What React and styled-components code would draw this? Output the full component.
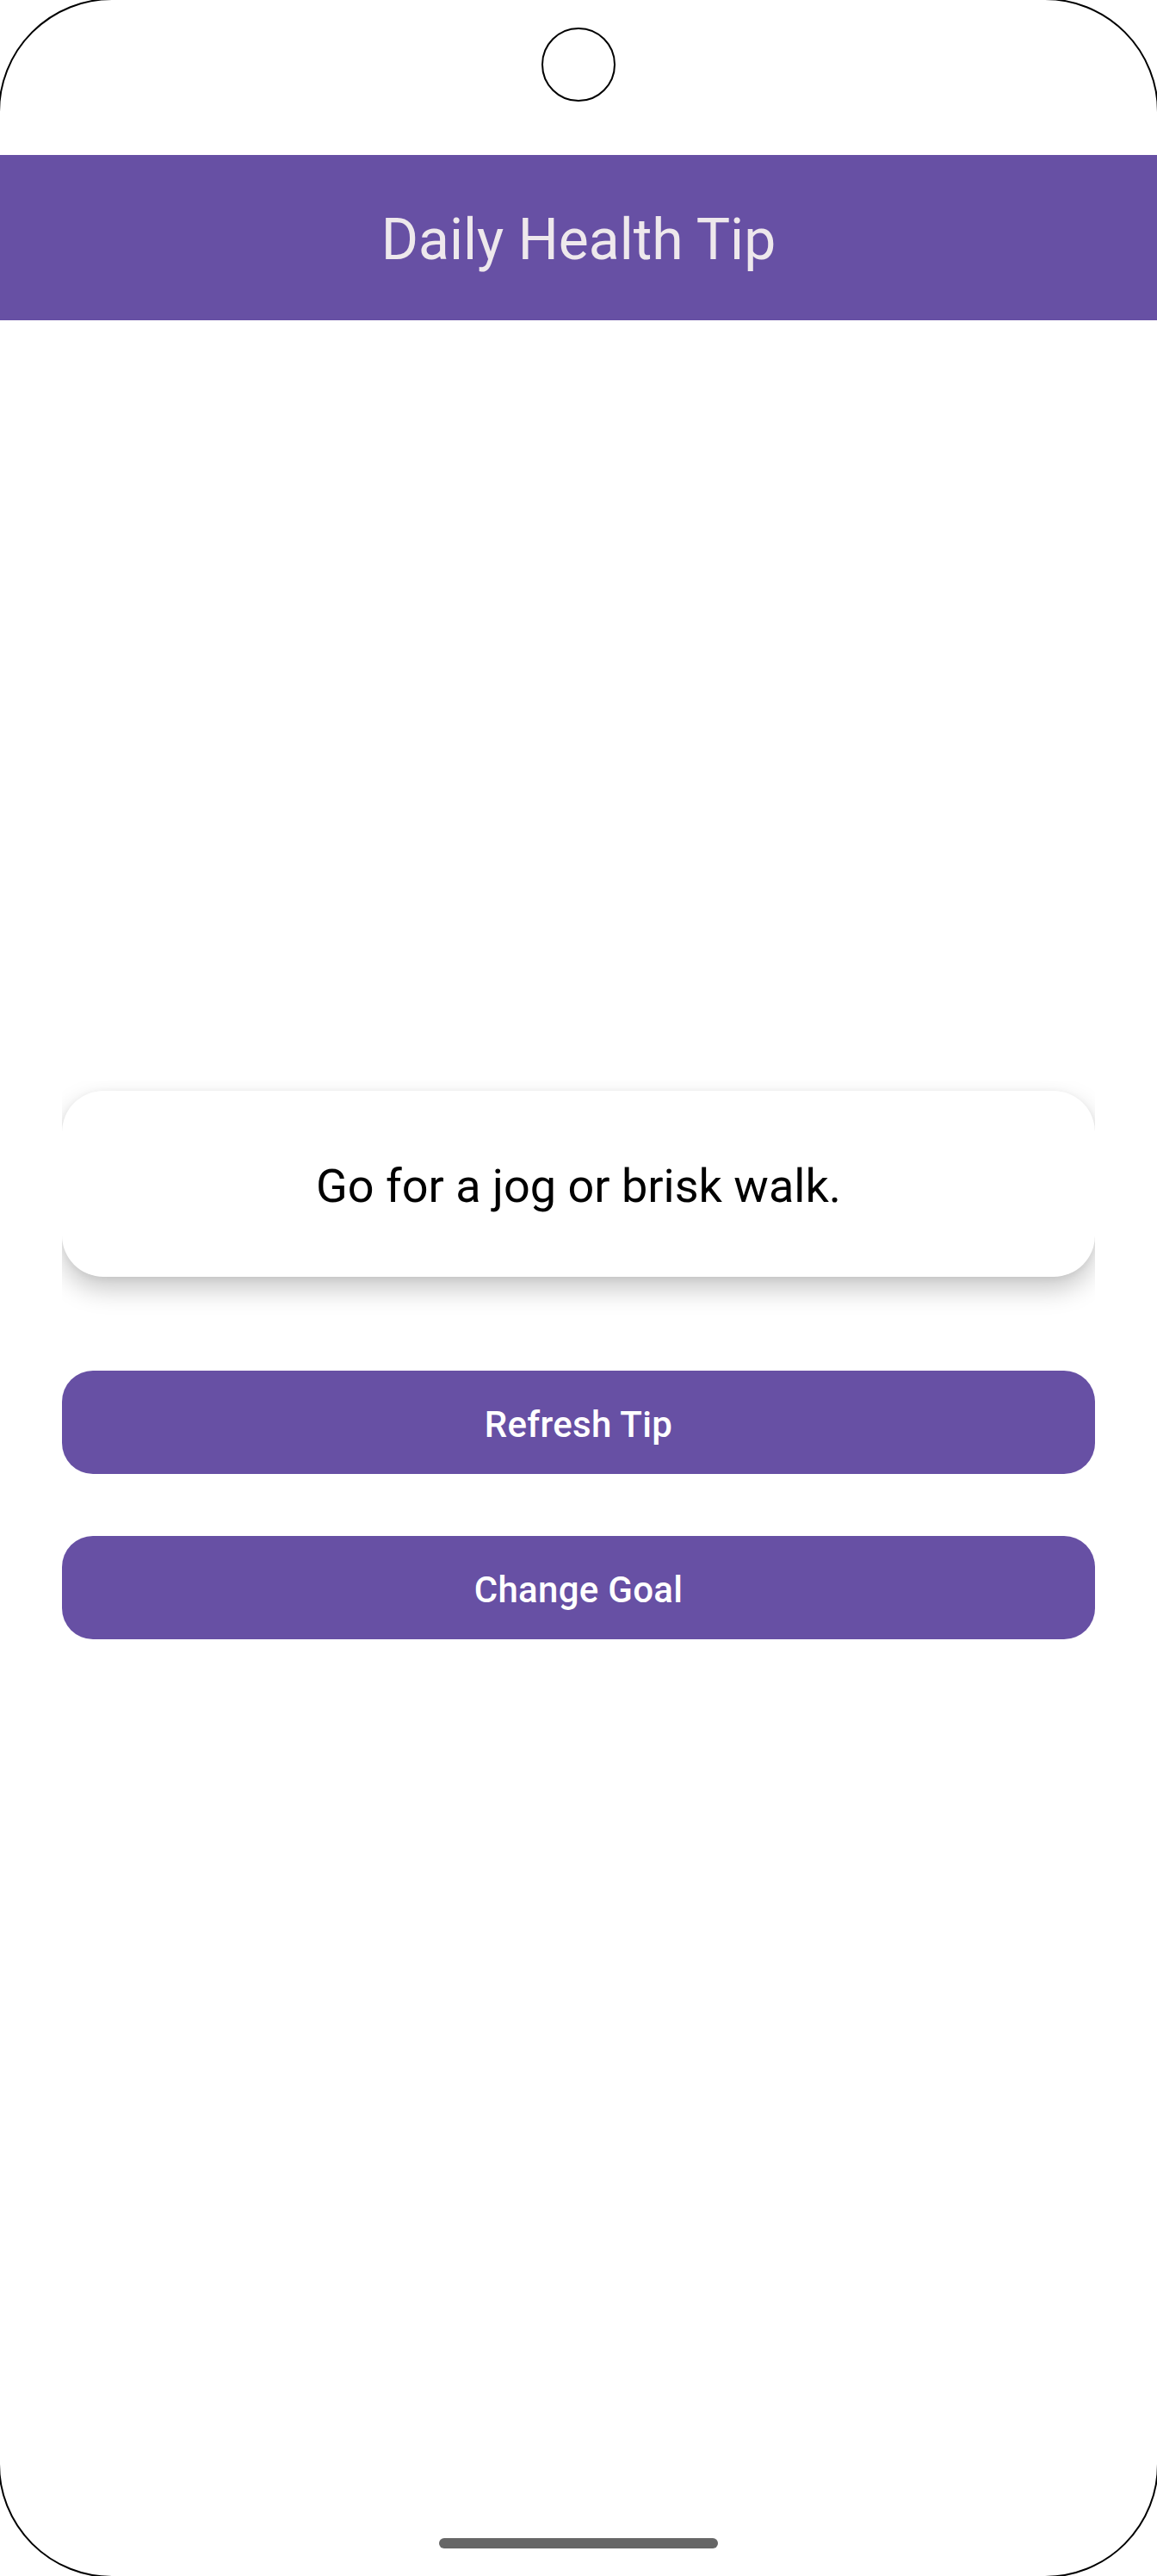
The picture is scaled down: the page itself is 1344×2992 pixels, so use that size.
import React from "react";
import styled, { createGlobalStyle } from "styled-components";

const GlobalStyle = createGlobalStyle`
  html, body {
    margin: 0;
    padding: 0;
    background: #ffffff;
    overflow: hidden;
  }
  body {
    font-family: Roboto, "Noto Sans", "Liberation Sans", sans-serif;
  }
  * { box-sizing: border-box; }
`;

const Viewport = styled.div`
  width: 1344px;
  height: 2992px;
  overflow: hidden;
`;

const Frame = styled.div`
  width: 1348px;
  height: 2996px;
  margin: -2px;
  border: 2px solid #000;
  border-radius: 132px;
  overflow: hidden;
  background: #fff;
  display: flex;
  flex-direction: column;
`;

const StatusArea = styled.div`
  height: 180px;
  flex-shrink: 0;
  display: flex;
  justify-content: center;
  padding-top: 32px;
`;

const Camera = styled.div`
  width: 86px;
  height: 86px;
  border: 2px solid #000;
  border-radius: 50%;
`;

const TopBar = styled.header`
  height: 192px;
  flex-shrink: 0;
  background: #6750a4;
  display: flex;
  align-items: center;
  justify-content: center;
  padding-top: 6px;
`;

const Title = styled.h1`
  margin: 0;
  font-family: Roboto, "Liberation Sans", sans-serif;
  font-weight: 400;
  font-size: 66px;
  line-height: 84px;
  color: #eee8ec;
`;

const Content = styled.main`
  display: flex;
  flex-direction: column;
  padding: 883px 72px 0;
`;

const ShadowClip = styled.div`
  overflow: hidden;
  padding: 12px 0 44px;
`;

const Card = styled.div`
  background: #fff;
  border-radius: 48px;
  padding: 75px 24px 69px;
  box-shadow: 0 14px 30px rgba(0, 0, 0, 0.22), 0 2px 8px rgba(0, 0, 0, 0.06);
  text-align: center;
`;

const TipText = styled.p`
  margin: 0;
  font-family: Roboto, "Liberation Sans", sans-serif;
  font-size: 54px;
  line-height: 72px;
  font-weight: 400;
  color: #000;
`;

const Actions = styled.div`
  display: flex;
  flex-direction: column;
  gap: 72px;
  margin-top: 65px;
`;

const ActionButton = styled.button`
  height: 120px;
  border: none;
  border-radius: 36px;
  background: #6750a4;
  color: #fff;
  font-family: Roboto, "Liberation Sans", sans-serif;
  font-weight: 500;
  font-size: 42px;
  letter-spacing: 0.3px;
  cursor: pointer;
  display: flex;
  align-items: center;
  justify-content: center;
  padding: 4px 0 0;
`;

const HomeIndicator = styled.div`
  margin: auto auto 32px;
  width: 324px;
  height: 12px;
  border-radius: 6px;
  background: #666666;
  flex-shrink: 0;
`;

export default function App() {
  return (
    <Viewport>
      <GlobalStyle />
      <Frame>
        <StatusArea>
          <Camera />
        </StatusArea>
        <TopBar>
          <Title>Daily Health Tip</Title>
        </TopBar>
        <Content>
          <ShadowClip>
            <Card>
              <TipText>Go for a jog or brisk walk.</TipText>
            </Card>
          </ShadowClip>
          <Actions>
            <ActionButton>Refresh Tip</ActionButton>
            <ActionButton>Change Goal</ActionButton>
          </Actions>
        </Content>
        <HomeIndicator />
      </Frame>
    </Viewport>
  );
}
